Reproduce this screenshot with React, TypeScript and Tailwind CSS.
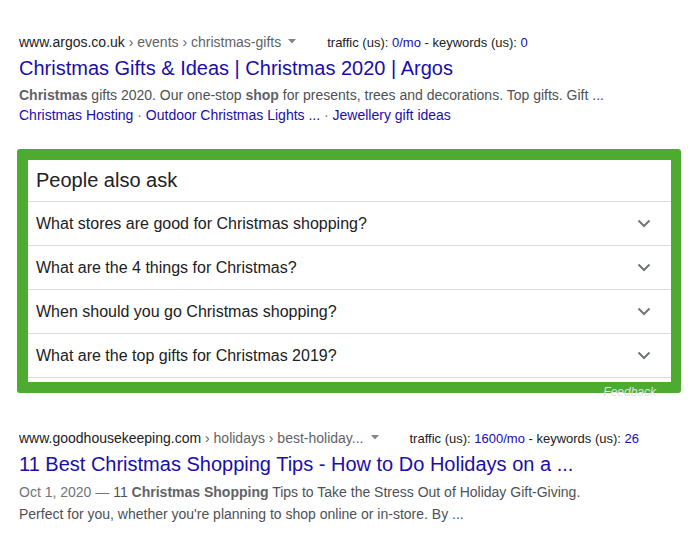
import React from "react";

const questions = [
  "What stores are good for Christmas shopping?",
  "What are the 4 things for Christmas?",
  "When should you go Christmas shopping?",
  "What are the top gifts for Christmas 2019?",
];

function Chevron() {
  return (
    <svg width="14" height="9" viewBox="0 0 14 9" fill="none">
      <path d="M1.5 1.5L7 7L12.5 1.5" stroke="#70757a" strokeWidth="2" />
    </svg>
  );
}

function Caret() {
  return (
    <svg width="8" height="5" viewBox="0 0 8 5" className="inline-block ml-[7px] mb-[1px]">
      <path d="M0 0H8L4 4.5Z" fill="#80868b" />
    </svg>
  );
}

function Stats({ traffic, keywords }: { traffic: string; keywords: string }) {
  return (
    <span className="text-[13px] text-[#202124]">
      traffic (us): <span className="text-[#1a0dab]">{traffic}</span> - keywords (us):{" "}
      <span className="text-[#1a0dab]">{keywords}</span>
    </span>
  );
}

export default function App() {
  return (
    <div className="w-[697px] h-[549px] bg-white font-['Liberation_Sans',Arial,sans-serif] overflow-hidden">
      {/* first result */}
      <div className="pt-[33px] pl-[19px]">
        <div className="flex items-center h-[18px] text-[14px] leading-[18px]">
          <span className="text-[#202124]">www.argos.co.uk</span>
          <span className="text-[#5f6368]">&nbsp;› events › christmas-gifts</span>
          <Caret />
          <span className="ml-[31px]">
            <Stats traffic="0/mo" keywords="0" />
          </span>
        </div>
        <div className="mt-[4px] text-[20px] leading-[26px] text-[#1a0dab]">
          Christmas Gifts &amp; Ideas | Christmas 2020 | Argos
        </div>
        <div className="mt-[4px] text-[14px] leading-[20px] text-[#4d5156]">
          <b className="text-[#5f6368]">Christmas</b> gifts 2020. Our one-stop{" "}
          <b className="text-[#5f6368]">shop</b> for presents, trees and decorations. Top gifts. Gift ...
        </div>
        <div className="text-[14px] leading-[20px] text-[#1a0dab]">
          Christmas Hosting <span className="text-[#70757a]">·</span> Outdoor Christmas Lights ...{" "}
          <span className="text-[#70757a]">·</span> Jewellery gift ideas
        </div>
      </div>

      {/* people also ask */}
      <div className="relative mt-[24px] ml-[17px] w-[664px] border-[11px] border-r-[10px] border-[#4dab2f] rounded-[3px] bg-white pb-[4px]">
        <div className="h-[41px] flex items-center pl-[8px] pb-[2px] text-[20px] text-[#202124]">People also ask</div>
        {questions.map((q) => (
          <div
            key={q}
            className="h-[44px] flex items-center justify-between border-t border-[#dadce0] pl-[8px] pr-[20px] text-[16px] text-[#202124]"
          >
            <span>{q}</span>
            <Chevron />
          </div>
        ))}
        <div className="border-t border-[#dadce0]" />
        <span className="absolute right-[15px] bottom-[-19px] text-[12px] italic text-[#dfe3e0]">Feedback</span>
      </div>

      {/* second result */}
      <div className="pt-[36px] pl-[19px]">
        <div className="flex items-center h-[18px] text-[14px] leading-[18px]">
          <span className="text-[#202124]">www.goodhousekeeping.com</span>
          <span className="text-[#5f6368]">&nbsp;› holidays › best-holiday...</span>
          <Caret />
          <span className="ml-[31px]">
            <Stats traffic="1600/mo" keywords="26" />
          </span>
        </div>
        <div className="mt-[4px] text-[20px] leading-[26px] text-[#1a0dab]">
          11 Best Christmas Shopping Tips - How to Do Holidays on a ...
        </div>
        <div className="mt-[4px] text-[14px] leading-[22px] text-[#4d5156]">
          <span className="text-[#70757a]">Oct 1, 2020 — </span>11{" "}
          <b className="text-[#5f6368]">Christmas Shopping</b> Tips to Take the Stress Out of Holiday Gift-Giving.
          <br />
          Perfect for you, whether you're planning to shop online or in-store. By ...
        </div>
      </div>
    </div>
  );
}
